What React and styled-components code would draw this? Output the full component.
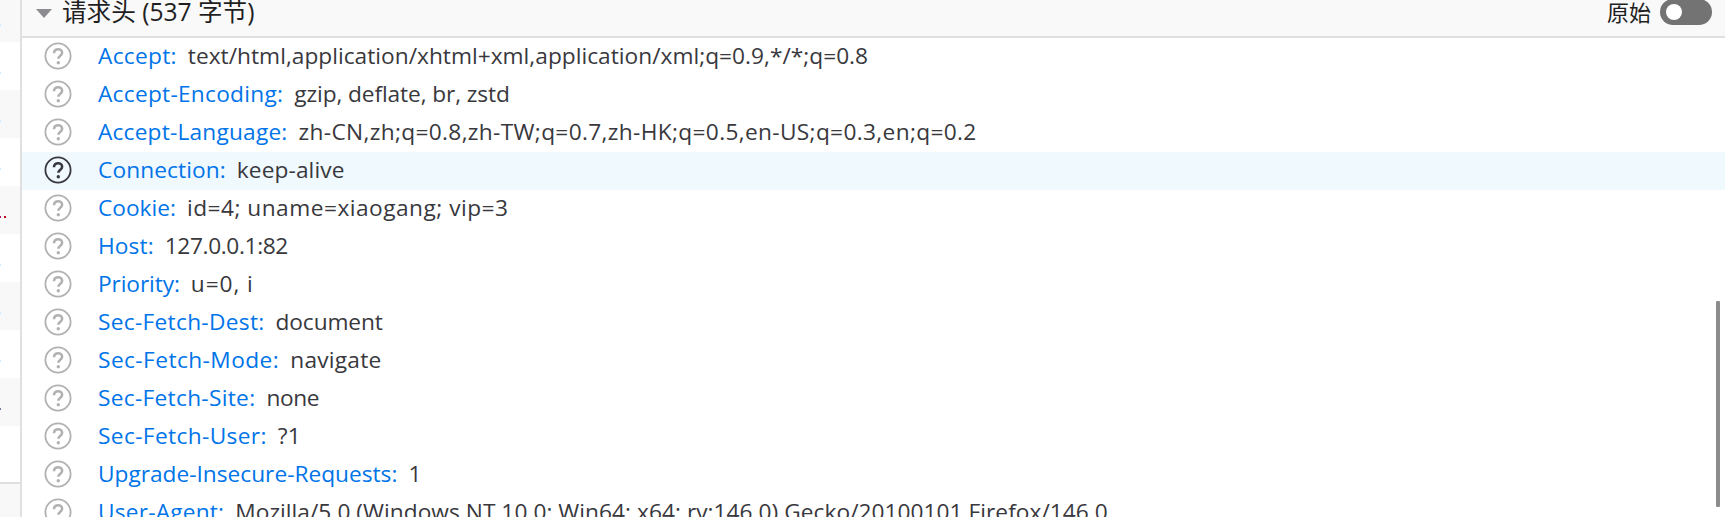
import React from 'react';
import styled, { createGlobalStyle } from 'styled-components';

const HEADERS = [
  { name: 'Accept', value: 'text/html,application/xhtml+xml,application/xml;q=0.9,*/*;q=0.8', nameTrack: 0.3, valueTrack: 0.02 },
  { name: 'Accept-Encoding', value: 'gzip, deflate, br, zstd', nameTrack: 0.27, valueTrack: -0.1 },
  { name: 'Accept-Language', value: 'zh-CN,zh;q=0.8,zh-TW;q=0.7,zh-HK;q=0.5,en-US;q=0.3,en;q=0.2', nameTrack: 0.2, valueTrack: 0.34 },
  { name: 'Connection', value: 'keep-alive', nameTrack: 0.1, valueTrack: 0.1 },
  { name: 'Cookie', value: 'id=4; uname=xiaogang; vip=3', nameTrack: 0, valueTrack: 0.49 },
  { name: 'Host', value: '127.0.0.1:82', nameTrack: 0.1, valueTrack: -0.37 },
  { name: 'Priority', value: 'u=0, i', nameTrack: -0.1, valueTrack: 0.9 },
  { name: 'Sec-Fetch-Dest', value: 'document', nameTrack: 0.3, valueTrack: -0.1 },
  { name: 'Sec-Fetch-Mode', value: 'navigate', nameTrack: 0.44, valueTrack: 0.25 },
  { name: 'Sec-Fetch-Site', value: 'none', nameTrack: 0.3, valueTrack: -0.4 },
  { name: 'Sec-Fetch-User', value: '?1', nameTrack: 0.37, valueTrack: 0 },
  { name: 'Upgrade-Insecure-Requests', value: '1', nameTrack: 0, valueTrack: 0 },
  { name: 'User-Agent', value: 'Mozilla/5.0 (Windows NT 10.0; Win64; x64; rv:146.0) Gecko/20100101 Firefox/146.0', nameTrack: 0.2, valueTrack: 0.04 },
];

// what is left visible of the request list behind the side panel
const STRIPS = [
  { height: 42, odd: true, mark: '#cfeafc' },
  { height: 48, odd: false, mark: '#cfeafc' },
  { height: 48, odd: true, mark: '#cfeafc' },
  { height: 48, odd: false, mark: '#cfeafc' },
  { height: 48, odd: true, mark: '#b0106a', dot: true },
  { height: 48, odd: false, mark: '#cfeafc' },
  { height: 48, odd: true, mark: '#cfeafc' },
  { height: 48, odd: false, mark: '#cfeafc' },
  { height: 48, odd: true, mark: '#6a7a9a' },
  { height: 56, odd: false, mark: '' },
];

const Global = createGlobalStyle`
  html, body {
    margin: 0;
    padding: 0;
    height: 517px;
    overflow: hidden;
    background: #ffffff;
  }
`;

const Page = styled.div`
  display: flex;
  width: 1725px;
  height: 517px;
  overflow: hidden;
  font-family: "Open Sans", "Noto Sans", "Noto Sans CJK SC", sans-serif;
`;

const SideList = styled.div`
  width: 20px;
  flex-shrink: 0;
  display: flex;
  flex-direction: column;
  border-right: 2px solid #e0e0e2;
`;

const Strip = styled.div`
  height: ${(props) => props.$height}px;
  flex-shrink: 0;
  background: ${(props) => (props.$odd ? '#f8f8f9' : '#ffffff')};
  display: flex;
  align-items: flex-end;
  gap: 3px;
  padding-bottom: 16px;
  box-sizing: border-box;
`;

const Mark = styled.span`
  width: ${(props) => (props.$wide ? 2 : 1)}px;
  height: 2px;
  background: ${(props) => props.$color};
`;

const StatusBar = styled.div`
  flex: 1;
  background: #f8f8f9;
  border-top: 2px solid #e0e0e2;
`;

const Main = styled.div`
  flex: 1;
  min-width: 0;
  display: flex;
  flex-direction: column;
`;

const SectionHeader = styled.div`
  height: 36px;
  flex-shrink: 0;
  display: flex;
  align-items: flex-start;
  padding: 0 13px 0 14px;
  background: #f9f9fa;
  border-bottom: 2px solid #e0e0e2;
`;

const Twisty = styled.span`
  width: 0;
  height: 0;
  margin-top: 9px;
  border-left: 8px solid transparent;
  border-right: 8px solid transparent;
  border-top: 9px solid #8c8c90;
  margin-right: 10px;
`;

const Title = styled.span`
  font-size: 24.6px;
  line-height: 24px;
  color: #1f1f22;
  flex: 1;
`;

const RawLabel = styled.span`
  font-size: 22px;
  line-height: 24px;
  color: #1f1f22;
  margin-right: 9px;
`;

const Toggle = styled.span`
  width: 52px;
  height: 26px;
  margin-top: -1px;
  border-radius: 13px;
  background: #737373;
  display: flex;
  align-items: center;
  padding-left: 6px;
  box-sizing: border-box;
`;

const Knob = styled.span`
  width: 16px;
  height: 16px;
  border-radius: 50%;
  background: #ffffff;
`;

const Rows = styled.div`
  position: relative;
  flex: 1;
`;

const Row = styled.div`
  height: 38px;
  display: flex;
  align-items: center;
  white-space: nowrap;
  font-size: 22.7px;
  padding-left: 22px;
  background: ${(props) => (props.$hovered ? '#f0f9fe' : 'transparent')};
`;

const HelpIcon = styled.svg`
  width: 28px;
  height: 28px;
  flex-shrink: 0;
  margin-right: 26px;
  margin-top: -2px;
  color: ${(props) => (props.$hovered ? '#38383d' : '#b1b1b3')};
`;

const Name = styled.span`
  color: #0074e8;
  margin-top: -3px;
  letter-spacing: ${(props) => props.$track}px;
`;

const Value = styled.span`
  color: #38383d;
  margin-left: 11px;
  margin-top: -3px;
  letter-spacing: ${(props) => props.$track}px;
`;

const ScrollThumb = styled.div`
  position: absolute;
  top: 263px;
  right: 5px;
  width: 4px;
  height: 206px;
  border-radius: 1px;
  background: #8c8c8c;
`;

const Help = ({ hovered }) => (
  <HelpIcon $hovered={hovered} viewBox="0 0 28 28" fill="none">
    <circle cx="14" cy="14" r="12.6" stroke="currentColor" strokeWidth="1.8" />
    <path
      d="M10 11.2c0-2.4 1.8-4 4.1-4 2.300 0 4 1.500 4 3.600 0 1.700-1 2.600-2.200 3.400-1 .7-1.500 1.200-1.500 2.500"
      stroke="currentColor"
      strokeWidth="2.600"
    />
    <circle cx="14.300" cy="20.800" r="1.700" fill="currentColor" />
  </HelpIcon>
);

export default function App() {
  return (
    <Page>
      <Global />
      <SideList>
        {STRIPS.map((strip, i) => (
          <Strip key={i} $height={strip.height} $odd={strip.odd}>
            {strip.mark && <Mark $color={strip.mark} />}
            {strip.dot && <Mark $color="#c00020" $wide />}
          </Strip>
        ))}
        <StatusBar />
      </SideList>
      <Main>
        <SectionHeader>
          <Twisty />
          <Title>请求头 (537 字节)</Title>
          <RawLabel>原始</RawLabel>
          <Toggle>
            <Knob />
          </Toggle>
        </SectionHeader>
        <Rows>
          {HEADERS.map((header) => (
            <Row key={header.name} $hovered={header.name === 'Connection'}>
              <Help hovered={header.name === 'Connection'} />
              <Name $track={header.nameTrack}>{header.name}:</Name>
              <Value $track={header.valueTrack}>{header.value}</Value>
            </Row>
          ))}
          <ScrollThumb />
        </Rows>
      </Main>
    </Page>
  );
}
